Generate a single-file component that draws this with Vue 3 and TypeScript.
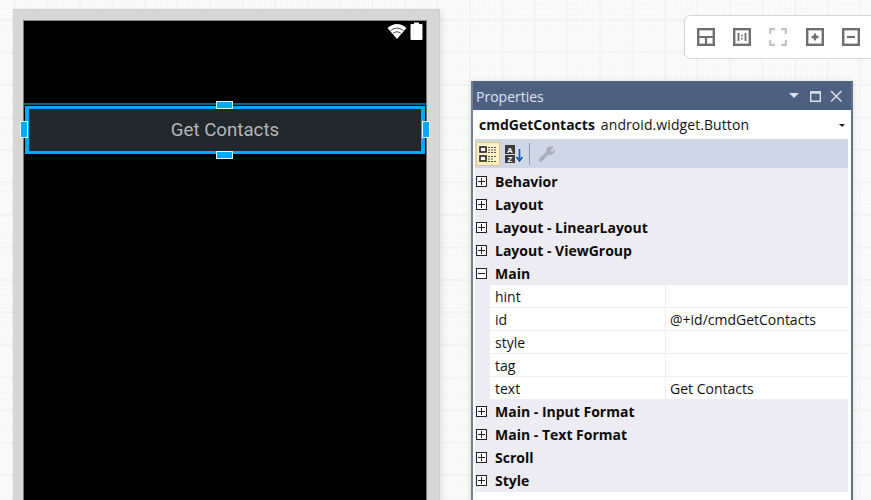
<template>
  <div class="canvas">
    <!-- device -->
    <div class="device">
      <div class="screen">
        <div class="status">
          <svg class="soft" width="20" height="18" viewBox="0 0 20 18">
            <path d="M0.5 6 Q10 -2 19.5 6 L10 17 Z" fill="#fff" />
            <path d="M3.6 8.6 Q10 3.4 16.4 8.6" fill="none" stroke="#000" stroke-width="0.9" opacity="0.75" />
            <path d="M6 11.4 Q10 8.2 14 11.4" fill="none" stroke="#000" stroke-width="0.9" opacity="0.75" />
          </svg>
          <svg class="soft" width="13" height="18" viewBox="0 0 13 18">
            <path d="M4 0.5 H9 V2 H11.5 Q12.5 2 12.5 3 V17 Q12.5 18 11.5 18 H1.5 Q0.5 18 0.5 17 V3 Q0.5 2 1.5 2 H4 Z" fill="#fff" />
          </svg>
        </div>
        <div class="button-line"></div>
        <div class="selected">
          <div class="droid-btn">Get Contacts</div>
          <span class="handle h-top"></span>
          <span class="handle h-bottom"></span>
          <span class="handle h-left"></span>
          <span class="handle h-right"></span>
        </div>
      </div>
    </div>

    <!-- zoom toolbar -->
    <div class="zoom-bar">
      <svg v-for="icon in zoomIcons" :key="icon.name" class="zoom-icon soft" width="18" height="18" viewBox="0 0 18 18">
        <template v-if="icon.name === 'layout'">
          <rect x="1.2" y="1.2" width="15.6" height="15.6" fill="none" stroke="#6f6f6f" stroke-width="2.4" />
          <path d="M1 9 H17 M9 9 V17" stroke="#6f6f6f" stroke-width="2.2" />
        </template>
        <template v-else-if="icon.name === 'actual'">
          <rect x="1.2" y="1.2" width="15.6" height="15.6" fill="none" stroke="#6f6f6f" stroke-width="2.4" />
          <path d="M4.6 5 H6.4 V13 H4.6 Z M11.6 5 H13.4 V13 H11.6 Z M8.2 6.8 H9.8 V8.4 H8.2 Z M8.2 9.8 H9.8 V11.4 H8.2 Z" fill="#6f6f6f" />
        </template>
        <template v-else-if="icon.name === 'fit'">
          <path d="M1.2 6 V1.2 H6 M12 1.2 H16.8 V6 M16.8 12 V16.8 H12 M6 16.8 H1.2 V12" fill="none" stroke="#c2c2c2" stroke-width="2.2" />
        </template>
        <template v-else-if="icon.name === 'plus'">
          <rect x="1.2" y="1.2" width="15.6" height="15.6" fill="none" stroke="#6f6f6f" stroke-width="2.4" />
          <path d="M5.5 9 H12.5 M9 5.5 V12.5" stroke="#6f6f6f" stroke-width="2.4" />
        </template>
        <template v-else>
          <rect x="1.2" y="1.2" width="15.6" height="15.6" fill="none" stroke="#6f6f6f" stroke-width="2.4" />
          <path d="M5 9 H13" stroke="#6f6f6f" stroke-width="2.2" />
        </template>
      </svg>
    </div>

    <!-- properties pad -->
    <div class="props">
      <div class="props-title">
        <span class="title-text">Properties</span>
        <svg class="title-icons" width="53" height="14" viewBox="0 0 53 14">
          <path d="M0 4 H10 L5 9 Z" fill="#d9dee8" />
          <path d="M21.7 3 H31.3 V12.3 H21.7 Z" fill="none" stroke="#d9dee8" stroke-width="1.4" />
          <path d="M21 3.5 H32" stroke="#d9dee8" stroke-width="2.4" />
          <path d="M42 2 L52.5 12.5 M52.5 2 L42 12.5" stroke="#d9dee8" stroke-width="1.5" />
        </svg>
      </div>
      <div class="props-name">
        <b>cmdGetContacts</b>
        <span class="type">android.widget.Button</span>
        <span class="arrow"></span>
      </div>
      <div class="props-tools">
        <span class="tool active">
          <svg width="20" height="20" viewBox="0 0 20 20">
            <rect x="2" y="3" width="6" height="5" fill="#fff" stroke="#222" stroke-width="1.6" />
            <rect x="2" y="12" width="6" height="5" fill="#fff" stroke="#222" stroke-width="1.6" />
            <path d="M10 3.5 H18 M10 6 H18 M10 8.5 H18 M10 12.5 H18 M10 15 H15 M10 17.5 H18" stroke="#555" stroke-width="1" stroke-dasharray="2 1" />
          </svg>
        </span>
        <span class="tool">
          <svg width="20" height="20" viewBox="0 0 20 20">
            <rect x="1" y="1" width="10" height="9" fill="#3c3c3c" />
            <rect x="1" y="11" width="10" height="8" fill="#3c3c3c" />
            <text x="6" y="8.6" class="az">A</text>
            <text x="6" y="18" class="az">Z</text>
            <path d="M15.5 5 V16 M12.5 13 L15.5 17 L18.5 13" fill="none" stroke="#fff" stroke-width="3.4" />
            <path d="M15.5 5 V16 M12.5 13 L15.5 17 L18.5 13" fill="none" stroke="#1a5fb4" stroke-width="2" />
          </svg>
        </span>
        <span class="sep"></span>
        <span class="tool wrench">
          <svg width="20" height="20" viewBox="0 0 20 20">
            <path d="M12 3 Q15 1.5 18 3 L14.5 6.5 L16 8 L19 5 Q19.5 9 16 10.5 Q14 11 12.5 10.5 L6 17.5 Q4 18.5 3 17 Q2 15.5 3.5 14.5 L10 8 Q9.5 5 12 3 Z" fill="#a9aeb8" />
          </svg>
        </span>
      </div>
      <div class="props-list">
        <template v-for="group in groups" :key="group.name">
          <div class="group">
            <span class="expander">
              <i class="h"></i>
              <i v-if="!group.rows" class="v"></i>
            </span>
            <span class="group-name">{{ group.name }}</span>
          </div>
          <div v-for="row in group.rows" :key="row.key" class="row">
            <span class="cell key">{{ row.key }}</span>
            <span class="cell val">{{ row.value }}</span>
          </div>
        </template>
      </div>
    </div>
  </div>
</template>

<script setup lang="ts">
interface Row {
  key: string;
  value: string;
}

interface Group {
  name: string;
  rows?: Row[];
}

const zoomIcons = [
  { name: 'layout' },
  { name: 'actual' },
  { name: 'fit' },
  { name: 'plus' },
  { name: 'minus' }
];

const groups: Group[] = [
  { name: 'Behavior' },
  { name: 'Layout' },
  { name: 'Layout - LinearLayout' },
  { name: 'Layout - ViewGroup' },
  {
    name: 'Main',
    rows: [
      { key: 'hint', value: '' },
      { key: 'id', value: '@+id/cmdGetContacts' },
      { key: 'style', value: '' },
      { key: 'tag', value: '' },
      { key: 'text', value: 'Get Contacts' }
    ]
  },
  { name: 'Main - Input Format' },
  { name: 'Main - Text Format' },
  { name: 'Scroll' },
  { name: 'Style' }
];
</script>

<style>
html,
body {
  margin: 0;
  overflow: hidden;
}
</style>

<style scoped>
.canvas {
  position: relative;
  width: 871px;
  height: 500px;
  overflow: hidden;
  background-color: #fcfcfc;
  background-image:
    linear-gradient(#f3f3f3 2px, transparent 2px),
    linear-gradient(90deg, #f3f3f3 2px, transparent 2px),
    linear-gradient(#f6f6f6 1px, transparent 1px),
    linear-gradient(90deg, #f6f6f6 1px, transparent 1px);
  background-size: 32.5px 32.5px, 32.5px 32.5px, 3.25px 3.25px, 3.25px 3.25px;
  background-position: 14px 19px, 14px 19px, 1px 2px, 1px 2px;
  font-family: "Open Sans", "Noto Sans", sans-serif;
}

.soft {
  filter: blur(0.35px);
}

/* device frame */
.device {
  position: absolute;
  left: 13px;
  top: 9px;
  width: 427px;
  height: 520px;
  box-sizing: border-box;
  padding: 10px 12px 10px 9px;
  background: #d7d7d7;
  border: 1px solid #cfcfcf;
  box-shadow: 2px 2px 6px rgba(0, 0, 0, 0.1);
}

.screen {
  position: relative;
  height: 100%;
  box-sizing: border-box;
  background: #000;
  border-top: 1px solid #8a8a8a;
  border-left: 1px solid #777;
  border-right: 1px solid #777;
}

.status {
  display: flex;
  justify-content: flex-end;
  align-items: flex-start;
  gap: 3px;
  padding: 1px 3px 0 0;
}

.button-line {
  position: absolute;
  left: 0;
  right: 0;
  top: 82px;
  height: 2px;
  background: #0a5f86;
}

.selected {
  position: absolute;
  left: 1px;
  right: 1px;
  top: 85px;
  height: 48px;
  box-sizing: border-box;
  border-style: solid;
  border-color: #00a8ff;
  border-width: 3px 4px;
  background: #22272b;
}

.droid-btn {
  height: 100%;
  display: flex;
  align-items: center;
  justify-content: center;
  color: #b4b6b8;
  font-family: Roboto, sans-serif;
  font-size: 18.7px;
  padding-bottom: 1px;
  box-sizing: border-box;
}

.handle {
  position: absolute;
  box-sizing: border-box;
  background: #00a8ff;
  border: 1px solid #e8f4fb;
}

.h-top,
.h-bottom {
  width: 17px;
  height: 8px;
  left: 187px;
}

.h-top {
  top: -8px;
}

.h-bottom {
  bottom: -8px;
}

.h-left,
.h-right {
  width: 8px;
  height: 17px;
  top: 12px;
}

.h-left {
  left: -9px;
}

.h-right {
  right: -9px;
}

/* zoom toolbar */
.zoom-bar {
  position: absolute;
  left: 684px;
  top: 15px;
  width: 210px;
  height: 44px;
  box-sizing: border-box;
  background: #fff;
  border: 1px solid #d4d4d4;
  border-radius: 6px;
  display: flex;
  align-items: center;
  gap: 18.2px;
  padding-left: 12px;
}

.zoom-icon {
  flex: none;
}

/* properties pad */
.props {
  position: absolute;
  left: 471px;
  top: 81px;
  width: 382px;
  height: 440px;
  box-sizing: border-box;
  background: #fff;
  border: 2px solid #5a6579;
  border-bottom: none;
  border-top-width: 1px;
  border-left-color: #777f8e;
  border-right-color: #677084;
  display: flex;
  flex-direction: column;
  box-shadow: 0 0 6px rgba(0, 0, 0, 0.12);
}

.props-title {
  height: 28px;
  flex: none;
  background: #4d6082;
  display: flex;
  align-items: center;
  justify-content: space-between;
  padding: 0 9px 0 3px;
  color: #dfe4ed;
  font-size: 14px;
}

.title-icons {
  flex: none;
}

.props-name {
  height: 29px;
  flex: none;
  display: flex;
  align-items: center;
  padding: 0 6px;
  gap: 6px;
  font-size: 14px;
  color: #111;
  position: relative;
}

.props-name b {
  font-weight: 700;
}

.type {
  letter-spacing: 0.08px;
}

.arrow {
  position: absolute;
  right: 6px;
  top: 14px;
  border-left: 3px solid transparent;
  border-right: 3px solid transparent;
  border-top: 3px solid #222;
}

.props-tools {
  height: 29px;
  flex: none;
  margin: 0 3px 0 2px;
  background: #cfd6e5;
  display: flex;
  align-items: center;
  padding-left: 1px;
  gap: 2px;
}

.tool {
  width: 24px;
  height: 24px;
  display: flex;
  align-items: center;
  justify-content: center;
}

.tool.active {
  background: #fbf0c6;
  border: 1px solid #e6c77a;
  box-sizing: border-box;
}

.wrench {
  margin-left: 1px;
}

.sep {
  width: 1px;
  height: 22px;
  background: #8e98ae;
  margin: 0 1px 0 1px;
}

.az {
  fill: #fff;
  font-family: "Liberation Sans", sans-serif;
  font-size: 8px;
  font-weight: 700;
  text-anchor: middle;
}

.props-list {
  margin: 0 3px 0 2px;
  padding-top: 2px;
  background: #edecf2;
}

.group {
  height: 23px;
  display: flex;
  align-items: center;
  font-size: 14px;
  font-weight: 700;
  color: #0b0b0b;
}

.expander {
  position: relative;
  width: 9px;
  height: 9px;
  margin: 0 8px 0 1px;
  border: 1px solid #222;
  background: #fff;
  flex: none;
  box-sizing: content-box;
}

.expander .h {
  position: absolute;
  left: 1px;
  right: 1px;
  top: 4px;
  height: 1px;
  background: #222;
}

.expander .v {
  position: absolute;
  top: 1px;
  bottom: 1px;
  left: 4px;
  width: 1px;
  background: #222;
}

.row {
  height: 23px;
  margin-left: 15px;
  display: grid;
  grid-template-columns: 175px 1fr;
  background: #fff;
  border-bottom: 1px solid #eeeef2;
  box-sizing: border-box;
  font-size: 14px;
  color: #111;
}

.cell {
  display: flex;
  align-items: center;
  padding-left: 5px;
}

.val {
  border-left: 1px solid #eeeef2;
  padding-left: 4px;
}
</style>
